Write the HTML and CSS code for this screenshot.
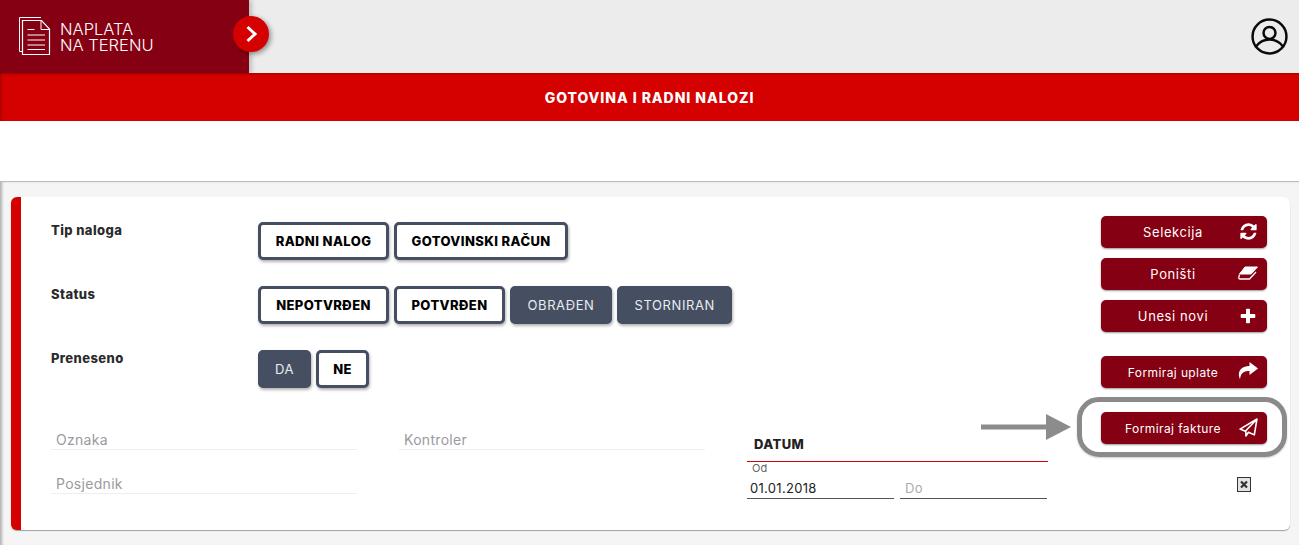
FILE: index.html
```html
<!DOCTYPE html>
<html lang="hr">
<head>
<meta charset="utf-8">
<title>Naplata na terenu</title>
<link rel="stylesheet" href="styles.css">
</head>
<body>
<header class="topbar">
  <div class="brand">
    <svg class="brand-icon" viewBox="0 0 32 39" fill="none" stroke="#fff" stroke-width="1">
      <path d="M3.500 34.500H.5V.5H22"/>
      <path d="M3.500 34V3.500H22.500L30.500 12V37.500H3.500Z" stroke-width="1.200"/>
      <path d="M22 4V12.500H30M8.500 12.500H15.500M8.500 18H26M8.500 23H26M8.500 28H26M8.500 32.500H26"/>
    </svg>
    <div class="brand-name">NAPLATA<br>NA TERENU</div>
    <button class="toggle" type="button" aria-label="Otvori">
      <svg viewBox="0 0 14 18" width="14" height="18" fill="none" stroke="#fff" stroke-width="3"><path d="M3.500 2L11 9l-7.500 7"/></svg>
    </button>
  </div>
  <svg class="user-icon" viewBox="0 0 36 36" fill="none" stroke="#0a0a0a" stroke-width="2.400">
    <circle cx="18" cy="18" r="16.500"/>
    <circle cx="18" cy="14.500" r="5.800"/>
    <path d="M5 27.500C9 22.500 13 21 18 21s9 1.500 13 6.500"/>
  </svg>
</header>
<div class="titlebar">GOTOVINA I RADNI NALOZI</div>
<div class="spacer"></div>
<main class="page">
  <section class="card">
    <div class="card-main">
      <div class="option-row">
        <div class="option-label">Tip naloga</div>
        <div class="option-buttons">
          <button class="chip chip-wide" type="button">RADNI NALOG</button>
          <button class="chip" type="button">GOTOVINSKI RAČUN</button>
        </div>
      </div>
      <div class="option-row">
        <div class="option-label">Status</div>
        <div class="option-buttons">
          <button class="chip chip-wide" type="button">NEPOTVRĐEN</button>
          <button class="chip" type="button">POTVRĐEN</button>
          <button class="chip chip-on" type="button">OBRAĐEN</button>
          <button class="chip chip-on" type="button">STORNIRAN</button>
        </div>
      </div>
      <div class="option-row">
        <div class="option-label">Preneseno</div>
        <div class="option-buttons">
          <button class="chip chip-on chip-short" type="button">DA</button>
          <button class="chip chip-short" type="button">NE</button>
        </div>
      </div>
      <div class="filters">
        <div class="field field-a">Oznaka</div>
        <div class="field field-b">Kontroler</div>
        <div class="field field-c">Posjednik</div>
        <div class="dates">
          <div class="dates-title">DATUM</div>
          <div class="dates-sub">Od</div>
          <div class="dates-inputs">
            <div class="date-input date-value">01.01.2018</div>
            <div class="date-input date-empty">Do</div>
          </div>
        </div>
      </div>
    </div>
    <aside class="actions">
      <button class="action" type="button"><span>Selekcija</span>
        <svg class="action-icon icon-refresh" viewBox="0 0 1792 1792" fill="#fff"><path d="M1639 1056q0 5-1 7-64 268-268 434.500t-478 166.500q-146 0-282.500-55t-243.500-157l-129 129q-19 19-45 19t-45-19-19-45v-448q0-26 19-45t45-19h448q26 0 45 19t19 45-19 45l-137 137q71 66 161 102t187 36q134 0 250-65t186-179q11-17 53-117 8-23 30-23h192q13 0 22.500 9.500t9.500 22.500zm25-800v448q0 26-19 45t-45 19h-448q-26 0-45-19t-19-45 19-45l138-138q-148-137-349-137-134 0-250 65t-186 179q-11 17-53 117-8 23-30 23h-199q-13 0-22.500-9.500t-9.500-22.500v-7q65-268 270-434.500t480-166.500q146 0 284 55.500t245 156.500l130-129q19-19 45-19t45 19 19 45z"/></svg>
      </button>
      <button class="action" type="button"><span>Poništi</span>
        <svg class="action-icon icon-eraser" viewBox="0 0 20 14" fill="none"><path d="M7 1H19.500L13 8H1.500Z" fill="#fff" stroke="#fff" stroke-linejoin="round"/><path d="M1.500 8.500L.8 11.500Q.6 13 2 13H11.500L18 6" stroke="#fff" stroke-width="1.300"/></svg>
      </button>
      <button class="action" type="button"><span>Unesi novi</span>
        <svg class="action-icon icon-plus" viewBox="0 0 16 16" fill="#fff"><path d="M6 1.500a.8.8 0 0 1 .8-.8h2.400a.8.8 0 0 1 .8.8V6h4.500a.8.8 0 0 1 .8.8v2.400a.8.8 0 0 1-.8.8H10v4.500a.8.8 0 0 1-.8.8H6.800a.8.8 0 0 1-.8-.8V10H1.500a.8.8 0 0 1-.8-.8V6.800a.8.8 0 0 1 .8-.8H6z"/></svg>
      </button>
      <button class="action action-small action-gap" type="button"><span>Formiraj uplate</span>
        <svg class="action-icon icon-share" viewBox="0 0 20 17" fill="#fff"><path d="M11.500 0L20 6.500 11.500 13V9C6.500 9 3 10 2 17 .2 14 -1 4.500 11.500 4z"/></svg>
      </button>
      <button class="action action-small" type="button"><span>Formiraj fakture</span>
        <svg class="action-icon icon-plane" viewBox="0 0 18 18" fill="none" stroke="#fff" stroke-width="1.500" stroke-linejoin="round"><path d="M17 1L1 10.500l5 2L17 1 14.500 16 9 13.500 6.500 17V12.500"/></svg>
      </button>
      <div class="clear-box"><svg viewBox="0 0 14 15" width="14" height="15"><rect x=".5" y=".5" width="13" height="14" fill="#e4e4e4" stroke="#333"/><path d="M4 4.500l6 6M10 4.500l-6 6" stroke="#333" stroke-width="2.200"/></svg></div>
    </aside>
    <div class="ring"></div>
    <svg class="arrow" viewBox="0 0 90 26"><path d="M0 10.500H65V0L90 13 65 26V15.500H0Z" fill="#8c8c8c"/></svg>
  </section>
</main>
</body>
</html>
```

FILE: styles.css
```css
* { box-sizing: border-box; }
html, body { margin: 0; height: 100%; overflow: hidden; }
body { background: #f5f5f5; font-family: "Inter", "Liberation Sans", sans-serif; color: #222; }
button { font-family: inherit; cursor: pointer; }

.topbar { height: 73px; background: #ececec; display: flex; justify-content: space-between; align-items: center; padding-right: 11px; }
.brand { position: relative; width: 249px; height: 73px; background: #850012; display: flex; align-items: center; padding-left: 19px; box-shadow: 3px 0 4px rgba(0,0,0,.18); }
.brand-icon { width: 32px; height: 39px; flex: none; }
.brand-name { margin-left: 9px; font-weight: 300; font-size: 16.500px; line-height: 16px; color: #fff; padding-top: 1px; }
.toggle { position: absolute; top: 16px; left: 233px; width: 36px; height: 36px; padding: 0; border: 0; border-radius: 50%; background: #d50000; box-shadow: 2px 2px 5px rgba(0,0,0,.4); display: flex; align-items: center; justify-content: center; }
.user-icon { width: 37px; height: 37px; }

.titlebar { height: 48px; background: #d50000; box-shadow: inset 3px 0 3px -2px rgba(0,0,0,.25), inset 0 2px 2px -1px rgba(0,0,0,.2); color: #fff; font-weight: 800; font-size: 14px; letter-spacing: .95px; line-height: 50px; text-align: center; }
.spacer { height: 61px; background: #fff; border-bottom: 1px solid #bdbdbd; }
.page { height: 364px; padding: 15px 9px 0 11px; box-shadow: inset 3px 0 3px -1px rgba(0,0,0,.28); }

.card { position: relative; height: 333px; background: #fff; border-left: 10px solid #d50000; border-radius: 6px; box-shadow: 0 1px 1px rgba(0,0,0,.35); display: flex; justify-content: space-between; padding: 19px 23px 0 30px; }
.card-main { width: 955px; padding-top: 6px; }

.option-row { display: flex; height: 38px; margin-bottom: 26px; }
.option-label { width: 207px; font-weight: 800; font-size: 13px; letter-spacing: .4px; line-height: 16px; color: #2b2b2b; }
.option-buttons { display: flex; gap: 5px; }
.chip { height: 38px; padding: 0 14.500px; border: 3px solid #454f61; border-radius: 5px; background: #fff; color: #000; font-size: 13px; letter-spacing: .4px; font-weight: 800; box-shadow: 1px 2px 3px rgba(0,0,0,.3); white-space: nowrap; }
.chip-wide { min-width: 131px; padding: 0; }
.chip-on { background: #454f61; color: #e8ecf2; font-weight: 400; letter-spacing: .6px; }
.chip-short { width: 53px; padding: 0; }

.filters { display: grid; grid-template-columns: 306px 306px 301px; column-gap: 42px; grid-template-rows: 30px 30px; row-gap: 14px; margin-top: 32px; }
.field { display: flex; align-items: flex-end; padding: 0 0 0 5px; border-bottom: 1px solid #eee; color: #9a9aa0; font-size: 14px; letter-spacing: .3px; line-height: 18px; }
.field-a { grid-column: 1; grid-row: 1; }
.field-b { grid-column: 2; grid-row: 1; }
.field-c { grid-column: 1; grid-row: 2; }
.dates { grid-column: 3; grid-row: 1 / 3; }
.dates-title { height: 42px; padding: 16px 0 0 7px; border-bottom: 1px solid #d50000; font-size: 13px; letter-spacing: .4px; line-height: 17px; font-weight: 800; color: #222; }
.dates-sub { padding-left: 5px; font-size: 11px; line-height: 13px; color: #666; }
.dates-inputs { display: flex; gap: 6px; margin-top: 1px; }
.date-input { width: 147px; height: 23px; border-bottom: 1px solid #555; font-size: 13px; letter-spacing: .3px; line-height: 19px; padding-top: 3px; }
.date-value { padding-left: 3px; color: #222; }
.date-empty { padding-left: 5px; color: #aaa; }

.actions { width: 166px; display: flex; flex-direction: column; gap: 10px; }
.action { position: relative; flex: none; width: 166px; height: 32px; padding: 0 22px 0 0; border: 0; border-radius: 5px; background: #850012; color: #fff; font-size: 13px; letter-spacing: .6px; box-shadow: 0 1px 2px rgba(0,0,0,.4); text-align: center; }
.action-small { font-size: 12px; letter-spacing: .4px; }
.action-gap { margin-top: 14px; margin-bottom: 14px; }
.action-icon { position: absolute; }
.icon-refresh { right: 9px; top: 6px; width: 19px; height: 19px; }
.icon-eraser { right: 9px; top: 8px; width: 20px; height: 14px; }
.icon-plus { right: 11px; top: 8px; width: 16px; height: 16px; }
.icon-share { right: 9px; top: 6px; width: 20px; height: 17px; }
.icon-plane { right: 9px; top: 6px; width: 19px; height: 19px; }
.clear-box { align-self: flex-end; margin: 23px 16px 0 0; height: 15px; line-height: 0; }

.ring { position: absolute; left: 1056px; top: 200px; width: 210px; height: 60px; border: 5px solid #8a8a8a; border-radius: 22px; box-shadow: 0 1px 2px rgba(0,0,0,.2); }
.arrow { position: absolute; left: 960px; top: 217px; width: 90px; height: 26px; }
```
